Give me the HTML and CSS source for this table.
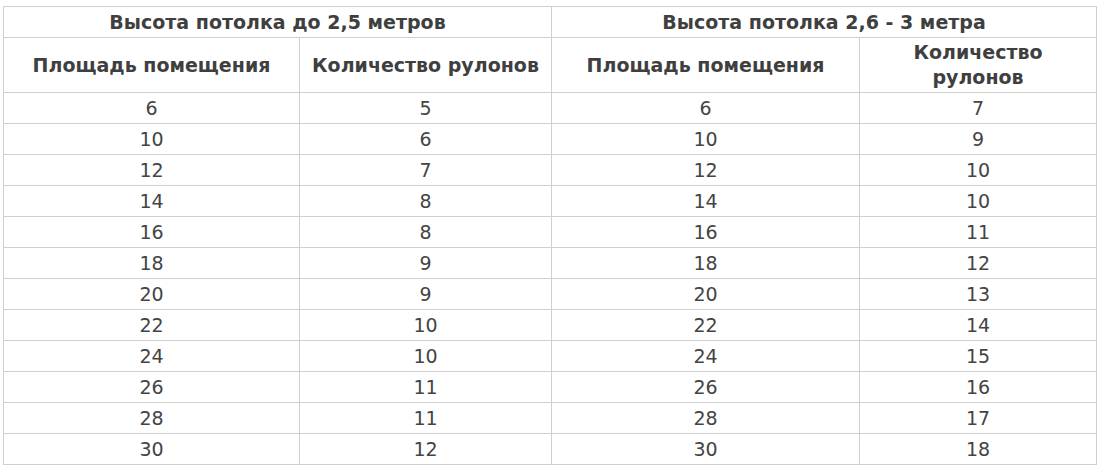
FILE: index.html
```html
<!DOCTYPE html>
<html lang="ru">
<head>
<meta charset="utf-8">
<link rel="stylesheet" href="styles.css">
</head>
<body>
<table class="rolls">
  <colgroup>
    <col class="c1"><col class="c2"><col class="c3"><col class="c4">
  </colgroup>
  <thead>
    <tr class="h1">
      <th colspan="2">Высота потолка до 2,5 метров</th>
      <th colspan="2">Высота потолка 2,6 - 3 метра</th>
    </tr>
    <tr class="h2">
      <th>Площадь помещения</th>
      <th>Количество рулонов</th>
      <th>Площадь помещения</th>
      <th class="narrow">Количество рулонов</th>
    </tr>
  </thead>
  <tbody>
    <tr><td>6</td><td>5</td><td>6</td><td>7</td></tr>
    <tr><td>10</td><td>6</td><td>10</td><td>9</td></tr>
    <tr><td>12</td><td>7</td><td>12</td><td>10</td></tr>
    <tr><td>14</td><td>8</td><td>14</td><td>10</td></tr>
    <tr><td>16</td><td>8</td><td>16</td><td>11</td></tr>
    <tr><td>18</td><td>9</td><td>18</td><td>12</td></tr>
    <tr><td>20</td><td>9</td><td>20</td><td>13</td></tr>
    <tr><td>22</td><td>10</td><td>22</td><td>14</td></tr>
    <tr><td>24</td><td>10</td><td>24</td><td>15</td></tr>
    <tr><td>26</td><td>11</td><td>26</td><td>16</td></tr>
    <tr><td>28</td><td>11</td><td>28</td><td>17</td></tr>
    <tr><td>30</td><td>12</td><td>30</td><td>18</td></tr>
  </tbody>
</table>
</body>
</html>
```
FILE: styles.css
```css
html, body {
  margin: 0;
  background: #fff;
}
body {
  padding: 6px 0 0 3px;
  font-family: "DejaVu Sans", Verdana, sans-serif;
  color: #444;
}
.rolls {
  border-collapse: collapse;
  table-layout: fixed;
  width: 1094px;
}
.c1 { width: 296px; }
.c2 { width: 252px; }
.c3 { width: 308px; }
.c4 { width: 237px; }
.rolls th, .rolls td {
  border: 1px solid #cfcfcf;
  text-align: center;
  vertical-align: middle;
  padding: 0 6px;
}
.rolls th {
  font-weight: bold;
  font-size: 19px;
  line-height: 25px;
  color: #3f3f3f;
}
.rolls td {
  font-size: 19px;
  height: 30px;
}
.h1 th { height: 30px; }
.h2 th { height: 54px; }
.h2 th.narrow { padding: 0 20px; }
```
